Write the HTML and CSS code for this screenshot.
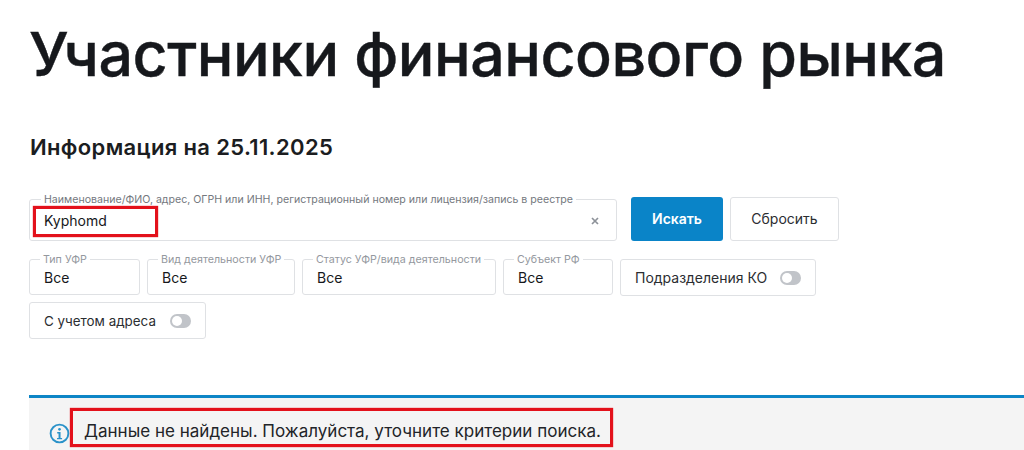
FILE: index.html
```html
<!DOCTYPE html>
<html lang="ru">
<head>
<meta charset="utf-8">
<title>Участники финансового рынка</title>
<link rel="stylesheet" href="styles.css">
</head>
<body>
<main class="page">
  <h1 class="title">Участники финансового рынка</h1>
  <h2 class="subtitle">Информация на 25.11.2025</h2>
  <form class="filters">
    <div class="row row-search">
      <div class="field field-search">
        <span class="legend">Наименование/ФИО, адрес, ОГРН или ИНН, регистрационный номер или лицензия/запись в реестре</span>
        <span class="value">Kyphomd</span>
        <svg class="clear" viewBox="0 0 8 8" width="8" height="8" aria-hidden="true"><path d="M1 1l6 6M7 1l-6 6" stroke="#8d9299" stroke-width="1.7" fill="none"/></svg>
        <span class="mark mark-query"></span>
      </div>
      <button type="button" class="btn btn-primary">Искать</button>
      <button type="button" class="btn btn-reset">Сбросить</button>
    </div>
    <div class="row row-selects">
      <div class="field f-type"><span class="legend">Тип УФР</span><span class="value">Все</span></div>
      <div class="field f-kind"><span class="legend">Вид деятельности УФР</span><span class="value">Все</span></div>
      <div class="field f-status"><span class="legend">Статус УФР/вида деятельности</span><span class="value">Все</span></div>
      <div class="field f-region"><span class="legend">Субъект РФ</span><span class="value">Все</span></div>
      <div class="toggle-box t-ko"><span>Подразделения КО</span><span class="switch"></span></div>
    </div>
    <div class="row row-address">
      <div class="toggle-box t-addr"><span class="addr-label">С учетом адреса</span><span class="switch"></span></div>
    </div>
  </form>
  <div class="alert">
    <svg class="info" viewBox="0 0 22 22" width="21" height="21" aria-hidden="true">
      <circle cx="11" cy="11" r="9.3" fill="none" stroke="#2a92c9" stroke-width="2"/>
      <circle cx="11" cy="6.6" r="1.4" fill="#2a92c9"/>
      <path d="M8.6 9.4h3.5v6.2h1.6v1.5H8.4v-1.5h1.6v-4.7H8.6z" fill="#2a92c9"/>
    </svg>
    <span class="alert-text">Данные не найдены. Пожалуйста, уточните критерии поиска.<span class="mark mark-alert"></span></span>
  </div>
</main>
</body>
</html>
```

FILE: styles.css
```css
* { box-sizing: border-box; }
html, body { margin: 0; height: 450px; overflow: hidden; background: #fff; }
body { font-family: Inter, "Noto Sans", sans-serif; color: #1f2126; }
.page { padding-left: 29px; }
.title {
  margin: 0;
  padding: 16px 0 0 0;
  font-size: 61px;
  line-height: 76px;
  font-weight: 500;
  letter-spacing: -0.53px;
  -webkit-text-stroke: 0.4px #16181c;
  color: #16181c;
  white-space: nowrap;
}
.subtitle {
  margin: 42px 0 0 1px;
  font-size: 22px;
  line-height: 26px;
  font-weight: 600;
  letter-spacing: 0.35px;
  color: #1b1d21;
}
.filters { margin-top: 37px; }
.row { display: flex; }
.row-search { gap: 14px; align-items: flex-start; height: 44px; }
.row-selects { margin-top: 18px; gap: 7px; }
.row-address { margin-top: 6px; }
.field {
  position: relative;
  display: flex;
  align-items: center;
  height: 36px;
  padding: 1px 14px 0;
  border: 1px solid #dfe1e4;
  border-radius: 3px;
  background: #fff;
}
.field-search { width: 588px; height: 42px; margin-top: 2px; padding-left: 14px; }
.f-type { width: 111px; }
.f-kind { width: 148px; }
.f-status { width: 194px; }
.f-region { width: 110px; }
.legend {
  position: absolute;
  top: -7px;
  left: 10px;
  padding: 0 3px;
  background: #fff;
  font-size: 10.7px;
  line-height: 13px;
  color: #94989e;
  white-space: nowrap;
}
.field-search .legend { left: 11px; padding: 0 3px; font-size: 10.6px; color: #74787e; }
.value { font-size: 14px; line-height: 18px; font-weight: 400; color: #16181c; }
.clear { position: absolute; right: 17px; top: 17px; }
.btn {
  height: 44px;
  border-radius: 3px;
  font: 500 14px/18px Inter, "Noto Sans", sans-serif;
  padding: 0;
}
.btn-primary { width: 92px; border: 0; background: #0a84c8; color: #fff; font-weight: 600; }
.btn-reset { width: 109px; margin-left: -7px; border: 1px solid #dfe1e4; background: #fff; color: #2b2d31; font-weight: 400; }
.toggle-box {
  display: flex;
  align-items: center;
  justify-content: space-between;
  height: 37px;
  padding: 0 14px;
  border: 1px solid #dfe1e4;
  border-radius: 3px;
  font-size: 14px;
  color: #2b2d31;
}
.t-ko { width: 196px; }
.t-addr { width: 177px; }
.addr-label { font-size: 13.4px; }
.switch {
  position: relative;
  width: 21px;
  height: 14px;
  border-radius: 7px;
  background: #c1c4c9;
}
.switch::before {
  content: "";
  position: absolute;
  left: 2px;
  top: 2px;
  width: 10px;
  height: 10px;
  border-radius: 50%;
  background: #fff;
}
.alert {
  display: flex;
  align-items: flex-start;
  gap: 14px;
  margin-top: 56px;
  height: 60px;
  padding: 22px 0 0 20px;
  border-top: 3px solid #0d85c6;
  background: #f4f4f4;
}
.alert-text { position: relative; font-size: 17.05px; line-height: 22px; color: #222428; white-space: nowrap; }
.info { flex: none; margin-top: 3px; }
.mark { position: absolute; border: 3px solid #e3111b; box-shadow: 0 0 1px #e3111b; pointer-events: none; }
.mark-query { left: 3px; top: 6px; width: 125px; height: 31px; }
.mark-alert { left: -14px; top: -12px; width: 543px; height: 39px; }
```
